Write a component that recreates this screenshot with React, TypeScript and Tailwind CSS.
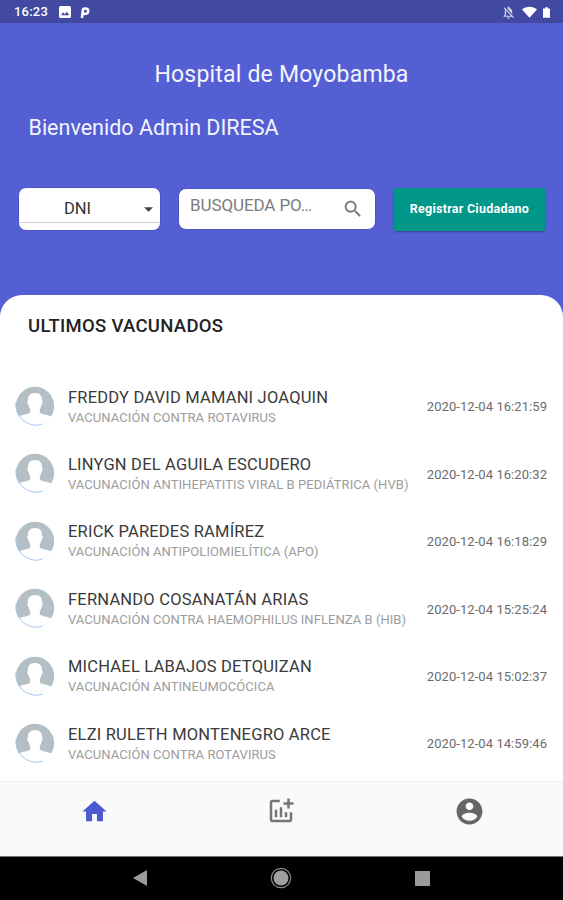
import React from "react";

type Citizen = { name: string; vaccine: string; date: string };

const citizens: Citizen[] = [
  { name: "FREDDY DAVID MAMANI JOAQUIN", vaccine: "VACUNACIÓN CONTRA ROTAVIRUS", date: "2020-12-04 16:21:59" },
  { name: "LINYGN DEL AGUILA ESCUDERO", vaccine: "VACUNACIÓN ANTIHEPATITIS VIRAL B PEDIÁTRICA (HVB)", date: "2020-12-04 16:20:32" },
  { name: "ERICK PAREDES RAMÍREZ", vaccine: "VACUNACIÓN ANTIPOLIOMIELÍTICA (APO)", date: "2020-12-04 16:18:29" },
  { name: "FERNANDO COSANATÁN ARIAS", vaccine: "VACUNACIÓN CONTRA HAEMOPHILUS INFLENZA B (HIB)", date: "2020-12-04 15:25:24" },
  { name: "MICHAEL LABAJOS DETQUIZAN", vaccine: "VACUNACIÓN ANTINEUMOCÓCICA", date: "2020-12-04 15:02:37" },
  { name: "ELZI RULETH MONTENEGRO ARCE", vaccine: "VACUNACIÓN CONTRA ROTAVIRUS", date: "2020-12-04 14:59:46" },
];

function Icon({ d, className }: { d: string; className: string }) {
  return (
    <svg viewBox="0 0 24 24" fill="currentColor" className={className}>
      <path d={d} />
    </svg>
  );
}

function Avatar() {
  return (
    <svg viewBox="0 0 40 40" className="-mt-[2px] h-10 w-10 shrink-0">
      <defs>
        <clipPath id="face">
          <circle cx="20" cy="20" r="19.5" />
        </clipPath>
      </defs>
      <circle cx="20" cy="20" r="19.2" fill="#b3bfc4" />
      <g clipPath="url(#face)">
        <path
          d="M20 7c-5.200 0-7.300 3.200-7 7.600-.9.300-.8 3.700.6 4.300.3 1.900.9 3.300 1.600 4.300v3.300C14.400 28.300 7 28.300 3 31L2 40h36l-1-9C33 28.300 25.600 28.300 24.800 26.500v-3.300c.7-1 1.300-2.400 1.600-4.300 1.400-.6 1.500-4 .6-4.300C27.300 10.200 25.200 7 20 7z"
          fill="#fff"
        />
      </g>
      <path d="M1 16C-.3 26 6.500 37.800 20 39.200c3 .1 5.500-.4 7.500-1.200" fill="none" stroke="#a9c8f5" strokeWidth="1" />
    </svg>
  );
}

export default function App() {
  return (
    <div className="flex h-[900px] w-[563px] flex-col overflow-hidden bg-[#535fd2] font-[Roboto,sans-serif]">
      <div className="flex h-[23px] shrink-0 items-center bg-[#4149a0] pt-px pr-[13px] pl-[14px] text-white">
        <span className="w-[43px] text-[13px] font-medium tracking-[0.2px] whitespace-nowrap">16:23</span>
        <svg viewBox="0 0 12 12" className="ml-[2px] h-3 w-3">
          <rect width="12" height="12" rx="1.500" fill="#fff" />
          <path d="M2 9.300l2.200-3 1.600 2 2-2.600L10.300 9.300z" fill="#4149a0" />
        </svg>
        <svg viewBox="0 0 12 13" className="ml-[8px] h-[13px] w-3">
          <path d="M2.900 12L4 3.300C5 2.200 9.200 1.700 9.200 4.900S6.200 8 4 7.800" fill="none" stroke="#fff" strokeWidth="2.600" strokeLinejoin="round" />
        </svg>
        <div className="ml-auto flex items-center">
          <Icon
            className="h-[15px] w-[15px] text-[#d5d8ee]"
            d="M20 18.690L7.840 6.140 5.270 3.490 4 4.760l2.800 2.800v.01c-.52.990-.8 2.160-.8 3.420v5l-2 2v1h13.730l2 2L21 19.720l-1-1.030zM12 22c1.110 0 2-.89 2-2h-4c0 1.110.89 2 2 2zm6-7.320V11c0-3.080-1.640-5.640-4.500-6.320V4c0-.83-.67-1.500-1.500-1.500s-1.500.67-1.500 1.500v.68c-.15.030-.29.080-.42.120-.1.030-.2.070-.3.110L18 14.680zM8 17v-6c0-.6.100-1.300.3-1.900L15.800 17z"
          />
          <svg viewBox="0 0 16 12" className="ml-[6px] h-3 w-[15px]">
            <path d="M0 3.200C4.500-.7 11.500-.7 16 3.200L8 12z" fill="#fff" />
          </svg>
          <svg viewBox="0 0 8 12" className="ml-[6px] h-[11px] w-[7px]">
            <path d="M2.500 0h3v1.500H8V12H0V1.500h2.500z" fill="#fff" />
          </svg>
        </div>
      </div>

      <header className="h-[272px] shrink-0">
        <h1 className="pt-[36px] text-center text-[23px] leading-8 tracking-[0.2px] text-[#f3f4ff]">Hospital de Moyobamba</h1>
        <p className="mt-[21px] ml-[28.500px] text-[21.500px] leading-8 text-[#f3f4ff]">Bienvenido Admin DIRESA</p>
        <div className="mt-[43px] flex pl-[18px]">
          <div className="h-[44px] w-[143px] rounded-[8px] border border-[#4b54c4] bg-white">
            <div className="flex h-[35px] items-center border-b border-[#cfcfcf] pt-[9px] pr-[7px] text-[16.500px] text-[#333]">
              <span className="flex-1 pr-[8px] text-center">DNI</span>
              <svg viewBox="0 0 10 5" className="h-[5px] w-[9px]">
                <path d="M0 0h10L5 5z" fill="#444" />
              </svg>
            </div>
          </div>
          <div className="mt-px ml-[17px] flex h-[42px] w-[198px] items-center rounded-[8px] border border-[#4b54c4] bg-white pr-[11px] pl-[11px]">
            <span className="-mt-[6px] flex-1 text-[17px] tracking-[-0.1px] whitespace-nowrap text-[#7c7c7c]">BUSQUEDA PO…</span>
            <Icon
              className="h-[22px] w-[22px] text-[#777]"
              d="M15.500 14h-.79l-.28-.27C15.410 12.590 16 11.110 16 9.500 16 5.910 13.090 3 9.500 3S3 5.910 3 9.500 5.910 16 9.500 16c1.610 0 3.090-.59 4.230-1.570l.27.28v.79l5 4.990L20.490 19l-4.990-5zm-6 0C7.010 14 5 11.990 5 9.500S7.010 5 9.500 5 14 7.010 14 9.500 11.990 14 9.500 14z"
            />
          </div>
          <button className="mt-px ml-[18px] h-[43px] w-[151px] rounded-[1px] bg-[#009688] text-[12.500px] font-bold tracking-[0.25px] whitespace-nowrap text-white shadow-[0_1px_2px_rgba(0,0,0,0.3)]">
            Registrar Ciudadano
          </button>
        </div>
      </header>

      <main className="flex h-[486px] shrink-0 flex-col overflow-hidden rounded-t-[22px] bg-white">
        <h2 className="mt-[17px] ml-[28px] h-[61.400px] text-[18.500px] leading-7 font-medium tracking-[0.3px] text-[#222]">ULTIMOS VACUNADOS</h2>
        {citizens.map((c) => (
          <div key={c.date} className="flex h-[67.400px] shrink-0 items-center pr-[16px] pl-[14.500px]">
            <Avatar />
            <div className="ml-[13.500px] flex-1 whitespace-nowrap">
              <div className="text-[16.500px] leading-[20px] tracking-[0.2px] text-[#3a3a3a]">{c.name}</div>
              <div className="text-[13px] leading-[19px] tracking-[0.060px] text-[#9c9c9c]">{c.vaccine}</div>
            </div>
            <span className="text-[13px] tracking-[0.060px] whitespace-nowrap text-[#6c6c6c]">{c.date}</span>
          </div>
        ))}
      </main>

      <nav className="grid h-[75px] shrink-0 grid-cols-3 justify-items-center border-t border-[#f3f3f3] bg-[#fafafa] pt-[14px]">
        <Icon className="mt-px ml-px h-[29px] w-[29px] text-[#4d59d0]" d="M10 20v-6h4v6h5v-8h3L12 3 2 12h3v8z" />
        <Icon
          className="h-[30px] w-[30px] text-[#757575]"
          d="M22 5v2h-3v3h-2V7h-3V5h3V2h2v3h3zm-3 14H5V5h6V3H5c-1.100 0-2 .9-2 2v14c0 1.100.9 2 2 2h14c1.100 0 2-.9 2-2v-6h-2v6zm-4-6v4h2v-4h-2zm-4 4h2V9h-2v8zm-2 0v-6H7v6h2z"
        />
        <Icon
          className="h-[31px] w-[31px] text-[#666]"
          d="M12 2C6.480 2 2 6.480 2 12s4.480 10 10 10 10-4.480 10-10S17.520 2 12 2zm0 3c1.660 0 3 1.340 3 3s-1.340 3-3 3-3-1.340-3-3 1.340-3 3-3zm0 14.200c-2.500 0-4.710-1.280-6-3.220.03-1.990 4-3.080 6-3.080 1.990 0 5.970 1.090 6 3.080-1.290 1.940-3.500 3.220-6 3.220z"
        />
      </nav>

      <div className="flex h-[44px] shrink-0 items-center justify-between border-t border-[#777] bg-black px-[133px]">
        <svg viewBox="0 0 14 16" className="-mt-px h-4 w-[14px]">
          <path d="M14 0v16L0 8z" fill="#9b9b9b" />
        </svg>
        <svg viewBox="0 0 22 22" className="-mt-[2px] h-[22px] w-[22px]">
          <circle cx="11" cy="11" r="9.700" fill="none" stroke="#8a8a8a" strokeWidth="1.200" />
          <circle cx="11" cy="11" r="7.500" fill="#a0a0a0" />
        </svg>
        <div className="h-[15px] w-[15px] bg-[#9b9b9b]" />
      </div>
    </div>
  );
}
